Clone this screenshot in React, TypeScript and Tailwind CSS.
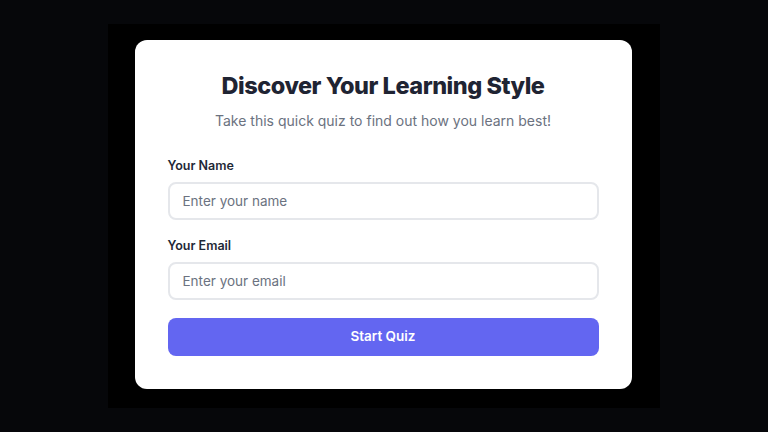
export default function App() {
  return (
    <div className="min-h-screen w-full bg-[#06070a] flex items-center justify-center" style={{ fontFamily: 'Inter, "Noto Sans", sans-serif' }}>
      <div className="w-[552px] h-[384px] bg-black flex items-center justify-center">
        <div className="w-[497px] mb-[4px] mr-[2px] bg-white rounded-xl px-[33px] pt-[30px] pb-[33px]">
          <h1 className="text-center text-[23.5px] leading-8 font-extrabold text-[#1f2433] tracking-[-0.02em]">
            Discover Your Learning Style
          </h1>
          <p className="mt-[9px] text-center text-[14px] leading-5 text-[#6b7280]">
            Take this quick quiz to find out how you learn best!
          </p>

          <form className="mt-[25px] flex flex-col" onSubmit={(e) => e.preventDefault()}>
            <label className="text-[12.5px] leading-5 font-semibold text-[#1f2937]">Your Name</label>
            <input
              type="text"
              placeholder="Enter your name"
              className="mt-[6px] h-[38px] w-full rounded-lg border-2 border-[#e5e7eb] px-[13px] text-[13.5px] text-[#1f2937] placeholder:text-[#6b7280] outline-none"
            />

            <label className="mt-4 text-[12.5px] leading-5 font-semibold text-[#1f2937]">Your Email</label>
            <input
              type="email"
              placeholder="Enter your email"
              className="mt-[6px] h-[38px] w-full rounded-lg border-2 border-[#e5e7eb] px-[13px] text-[13.5px] text-[#1f2937] placeholder:text-[#6b7280] outline-none"
            />

            <button
              type="submit"
              className="mt-[18px] h-[38px] w-full rounded-lg bg-[#6366f1] text-white text-[13.5px] font-semibold"
            >
              Start Quiz
            </button>
          </form>
        </div>
      </div>
    </div>
  );
}
